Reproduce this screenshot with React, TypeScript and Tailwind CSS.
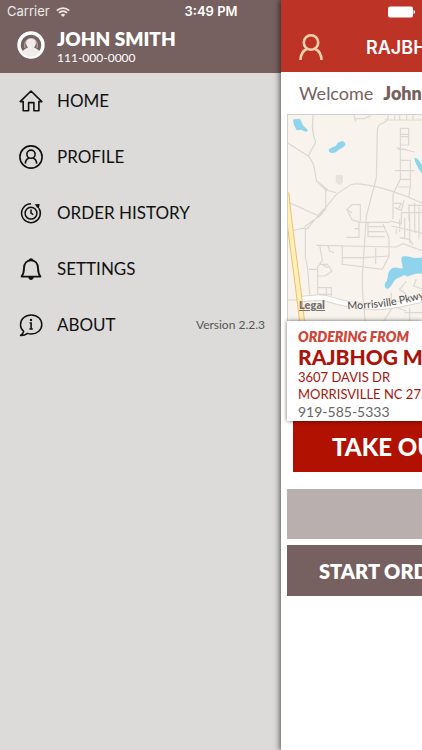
import type { ReactNode } from "react";

function HomeIcon() {
  return (
    <svg viewBox="0 0 24 24" className="size-6" fill="none" stroke="currentColor" strokeWidth="1.6" aria-hidden="true">
      <path d="M1.2 12.6 12 2l10.8 10.6H19.9v9.200H14.900v-8.200H9.600v8.200H4.200v-9.200z" strokeLinejoin="round" />
    </svg>
  );
}

function ProfileIcon() {
  return (
    <svg viewBox="0 0 24 24" className="size-6" fill="none" stroke="currentColor" strokeWidth="1.6" aria-hidden="true">
      <circle cx="12" cy="12" r="11.1" />
      <circle cx="12" cy="9.2" r="4.1" />
      <path d="M6.3 18.6c.2-3.300 2-5 3.700-5.600M17.700 18.600c-.2-3.300-2-5-3.700-5.600" />
    </svg>
  );
}

function HistoryIcon() {
  return (
    <svg viewBox="0 0 24 24" className="size-6" fill="none" stroke="currentColor" strokeWidth="1.5" aria-hidden="true">
      <path d="M12 2.800A9.400 9.400 0 1 0 20 7.300" />
      <path d="M17.800 6.200l2-1.700" />
      <path d="M15.600 3.200 20.600 3l-.8 4.900z" fill="currentColor" stroke="none" />
      <circle cx="12" cy="12.200" r="5.900" />
      <path d="M12 8.500v3.700l2.300 1.500" />
    </svg>
  );
}

function BellIcon() {
  return (
    <svg viewBox="0 0 24 24" className="size-6" fill="none" stroke="currentColor" strokeWidth="1.9" aria-hidden="true">
      <path d="M2.600 19.600c1.900-2.400 2.300-4.800 2.400-8.400C5.100 6.200 8 3.400 12 3.400s6.900 2.800 7 7.800c.1 3.600.5 6 2.400 8.400z" strokeLinejoin="round" />
      <path d="M9.600 3.400C9.900.6 14.100.6 14.400 3.400zM9.200 20h5.600c-.6 4-5 4-5.600 0z" fill="currentColor" stroke="none" />
    </svg>
  );
}

function AboutIcon() {
  return (
    <svg viewBox="0 0 24 24" className="size-6" fill="none" stroke="currentColor" strokeWidth="1.5" aria-hidden="true">
      <path d="M4.700 18.300C2.600 16.600 1.500 14.300 1.500 11.700 1.500 6.200 6 2 12.200 2s10.600 4.200 10.600 9.500-4.500 9.500-10.600 9.500c-1.400 0-2.500-.2-3.700-.6-2 1.500-4.200 2.200-7 2 1.700-.9 2.800-2.200 3.200-4.100z" strokeLinejoin="round" />
      <path d="M10.600 10h1.500v6M10.400 16h3.400" strokeWidth="1.6" />
      <circle cx="12" cy="7" r="1.200" fill="currentColor" stroke="none" />
    </svg>
  );
}

function MenuItem({ icon, label, note }: { icon: ReactNode; label: string; note?: string }) {
  return (
    <li className="flex h-14 items-center pr-4 pl-[19px]">
      <button type="button" className="flex items-center gap-3.5 text-[17px] leading-6 text-[#111]">
        {icon}
        {label}
      </button>
      {note && <span className="ml-auto text-[12px] text-[#555]">{note}</span>}
    </li>
  );
}

function StatusBar() {
  return (
    <div className="absolute inset-x-0 top-0 z-20 grid h-6 grid-cols-3 items-center px-[7px] font-[Inter,sans-serif] text-[13px] text-white">
      <span className="flex items-center gap-1.5 text-[#eee8e7]">
        Carrier
        <svg viewBox="0 0 14 10" className="h-2.5 w-3.5" fill="none" stroke="currentColor" strokeWidth="1.8" aria-hidden="true">
          <path d="M.8 3.600c3.500-3.400 8.900-3.400 12.400 0M3 5.900c2.300-2.200 5.700-2.200 8 0" />
          <path d="M4.700 7.700c1.300-1.200 3.300-1.200 4.600 0L7 10z" fill="currentColor" stroke="none" />
        </svg>
      </span>
      <span className="text-center font-semibold">3:49 PM</span>
      <svg viewBox="0 0 28 12" className="h-3 w-7 justify-self-end" fill="white" aria-hidden="true">
        <rect x="1" y="0.500" width="25" height="11" rx="2" />
        <path d="M26.500 4c2 .6 2 3.400 0 4z" />
      </svg>
    </div>
  );
}

function StoreMap() {
  return (
    <div className="relative h-[207px] overflow-hidden border-t border-l border-[#d4d0cc] bg-[#f8f4ed]">
      <svg viewBox="15 27 405 621" className="h-[207px] w-[135px]" fill="none" aria-label="Map of the area around the store">
        <g stroke="#dbd7d3" strokeWidth="3.6">
          <path d="M91 27C86 60 87 80 98 108L76 150M15 112L76 150C100 175 94 205 101 225L128 252 160 260M128 252V310L105 335M101 225L135 252" />
          <path d="M15 288L108 330 160 265 205 235C230 230 250 238 275 241 330 252 380 275 420 292" />
          <path d="M315 27C318 60 283 42 283 75L280 215 250 330 240 480C233 540 242 590 247 648" />
          <path d="M213 27l5 20M218 38h25l20-9M305 42H420M335 27v15M350 27v15M371 27v15M390 27v15M352 67h25v50h-25zM352 85h25M352 92h25M340 125l55 13M345 130h25M352 117v103L330 265v75M382 163v80l-5 30M352 163h30M335 194h60M350 220h32M345 243h35" />
          <path d="M232 345V296h-25l-15 15 15 30 24 8h90M207 320l-15-9M330 292h25l-8 15M335 305l20 8 8-30M378 295v50M378 298h42M395 290v90M320 345l35 8v-33h65M325 360l95 22M340 370v15M350 340v38M365 335v60M380 325v85M408 300v100M350 395l30 5 10 17" />
          <path d="M65 362l55-40M15 376c35-3 45-15 58-8l50-60M67 365v87C80 500 75 560 84 580M78 490h25M228 346v48h-38M215 368h13M100 418l240 5 20-10 60 22M255 348v45M255 362h52M255 377h50M255 392h50M300 355l18 40v55l-20 40-120-15V420M178 455h62l80-5M278 425v50M135 420l5 15 13 5M110 418l8 45-14 20v80M110 475h23l14 20-20 15h-22M117 475l17 10M105 545h40v25M130 545v22M104 565h40" />
          <path d="M325 560v50l-25 38M370 525l-20 25 20 15v25M400 520l-8 20 28 10M365 620h55M380 605v43M330 600l40 15" />
          <path d="M15 582h42" />
        </g>
        <path d="M50 580c40-5 65-8 90 0s70 20 120 22c60 5 120-15 160-22" stroke="#d9d5d1" strokeWidth="20" />
        <path d="M50 580c40-5 65-8 90 0s70 20 120 22c60 5 120-15 160-22" stroke="#fff" strokeWidth="14" />
        <path d="M10 260C22 390 47 540 57 648" stroke="#f3bc75" strokeWidth="18" />
        <path d="M10 260C22 390 47 540 57 648" stroke="#fff1b5" strokeWidth="12" />
        <path d="M158 207h22v22l-8 8-14-7z" fill="#e6e2e0" />
        <g fill="#8fd3ec">
          <path d="M31 40l20-2 9 20 15 15-6 5-14-7-14 2C35 60 30 55 31 40z" />
          <path d="M138 130c10-8 20-5 25-18 15-10 24-7 24 6-7 9-18 10-26 19-15 7-27 4-23-7z" />
          <path d="M394 155l10 3 16 22v28c-10-15-24-35-26-53z" />
          <path d="M357 452c20-4 30 5 42 4l21-2v50c-20-6-35 4-48 8-10-12-22 7-30 5-13 10-15 25-28 32-13-2-10-20-2-25 5-17 0-25 15-37 12-6 23 2 32 0 0-15-7-20-2-35z" />
        </g>
        <path id="parkway" d="M194 610C260 607 325 606 440 571" />
        <text fill="#555" stroke="#f8f4ed" strokeWidth="4" paintOrder="stroke" fontSize="32" fontFamily="Lato, sans-serif" fontWeight="500">
          <textPath href="#parkway">Morrisville Pkwy</textPath>
        </text>
      </svg>
      <a href="#legal" className="absolute bottom-2 left-[11px] text-[11px] leading-4 font-extrabold text-[#77736f] underline">Legal</a>
    </div>
  );
}

function Drawer() {
  return (
    <aside className="w-[281px] shrink-0">
      <header className="flex h-[73px] items-end gap-3 bg-[#766160] pb-[7px] pl-[17px] text-white">
        <svg viewBox="0 0 28 28" className="mb-[7px] size-7" aria-hidden="true">
          <circle cx="14" cy="14" r="12" fill="none" stroke="currentColor" strokeWidth="3.4" />
          <path d="M5 21c2-3 4-3.500 6-4.500-3-3-3-9 3-9s6 6 3 9c2 1 4 1.500 6 4.500-5 6.500-13 6.500-18 0z" fill="#f0ecec" />
          <path d="M8 17c-1-5 1-9.500 6-9.500s7 4.500 6 9.500" fill="none" stroke="#c9bfbe" />
        </svg>
        <div>
          <h2 className="text-[19px] leading-[22px] font-extrabold">JOHN SMITH</h2>
          <p className="text-[12px] leading-4">111-000-0000</p>
        </div>
      </header>
      <nav aria-label="Main menu">
        <ul>
          <MenuItem icon={<HomeIcon />} label="HOME" />
          <MenuItem icon={<ProfileIcon />} label="PROFILE" />
          <MenuItem icon={<HistoryIcon />} label="ORDER HISTORY" />
          <MenuItem icon={<BellIcon />} label="SETTINGS" />
          <MenuItem icon={<AboutIcon />} label="ABOUT" note="Version 2.2.3" />
        </ul>
      </nav>
    </aside>
  );
}

function StorePanel() {
  return (
    <main className="z-10 min-w-0 flex-1 overflow-hidden bg-white whitespace-nowrap shadow-[0_0_6px_1px_rgba(0,0,0,0.65)]">
      <header className="flex h-[72px] items-end gap-[43px] bg-[#bd3326] pb-3 pl-[18px] text-white">
        <button type="button" aria-label="Account" className="shrink-0 text-[#fbd0ac]">
          <svg viewBox="0 0 24 26" className="h-[26px] w-6" fill="none" stroke="currentColor" strokeWidth="2.6" aria-hidden="true">
            <circle cx="12" cy="8.500" r="7.200" />
            <path d="M1.500 26c.2-6 3-9.500 6.700-11.200M22.500 26c-.2-6-3-9.500-6.700-11.200" />
          </svg>
        </button>
        <h1 className="font-[Inter,sans-serif] text-[18px] leading-6 font-semibold">RAJBHOG</h1>
      </header>
      <p className="flex h-[42px] items-center gap-2.5 pl-[18px] text-[18px] text-[#766160]">
        Welcome <strong className="font-extrabold">John</strong>
      </p>
      <div className="pl-1.5">
        <StoreMap />
        <section className="relative z-10 h-[100px] bg-white pt-2 pl-[11px] text-[#aa140b] shadow-[0_0_4px_rgba(0,0,0,0.6)]">
          <h2 className="text-[14px] leading-4 font-extrabold text-[#d14436] italic">ORDERING FROM</h2>
          <p className="text-[21px] leading-6 font-black">RAJBHOG M</p>
          <address className="text-[13px] leading-[17px] not-italic">
            3607 DAVIS DR
            <br />
            MORRISVILLE NC 2754
          </address>
          <a href="tel:919-585-5333" className="block text-[14px] leading-[17px] text-[#666]">919-585-5333</a>
        </section>
        <button type="button" className="ml-1.5 block h-[51px] w-full bg-[#b01100] pl-[39px] text-left text-[24px] font-black text-white">TAKE OUT</button>
        <div className="mt-[17px] h-[50px] bg-[#b9afae]" />
        <button type="button" className="mt-1.5 block h-[51px] w-full bg-[#766160] pl-8 text-left text-[20px] font-extrabold text-white">START ORDER</button>
      </div>
    </main>
  );
}

export default function App() {
  return (
    <div className="relative flex min-h-screen overflow-hidden bg-[#dcdbd9] font-[Lato,sans-serif]">
      <StatusBar />
      <Drawer />
      <StorePanel />
    </div>
  );
}
